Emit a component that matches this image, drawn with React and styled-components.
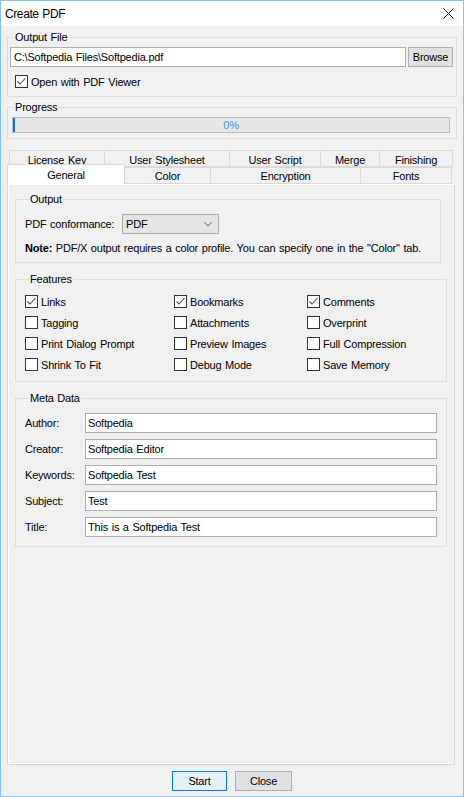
import styled, { createGlobalStyle } from "styled-components";

const GlobalStyle = createGlobalStyle`
  html, body {
    margin: 0;
    padding: 0;
    background: #f0f0f0;
  }
  * {
    box-sizing: border-box;
  }
`;

const FONT = `"Liberation Sans", Arial, sans-serif`;

const topTabs = [
  { label: "License Key", width: 96 },
  { label: "User Stylesheet", width: 126 },
  { label: "User Script", width: 92 },
  { label: "Merge", width: 60 },
  { label: "Finishing", width: 74 },
];

const bottomTabs = [
  { label: "General", width: 118, active: true },
  { label: "Color", width: 87 },
  { label: "Encryption", width: 151 },
  { label: "Fonts", width: 92 },
];

const features = [
  ["Links", true],
  ["Bookmarks", true],
  ["Comments", true],
  ["Tagging", false],
  ["Attachments", false],
  ["Overprint", false],
  ["Print Dialog Prompt", false],
  ["Preview Images", false],
  ["Full Compression", false],
  ["Shrink To Fit", false],
  ["Debug Mode", false],
  ["Save Memory", false],
];

const meta = [
  ["Author:", "Softpedia"],
  ["Creator:", "Softpedia Editor"],
  ["Keywords:", "Softpedia Test"],
  ["Subject:", "Test"],
  ["Title:", "This is a Softpedia Test"],
];

function CheckBox({ checked }) {
  return (
    <Box>
      {checked && (
        <svg width="11" height="11" viewBox="0 0 11 11">
          <path d="M1.5 5.5 L4 8 L9.5 2" fill="none" stroke="#555" strokeWidth="1.1" />
        </svg>
      )}
    </Box>
  );
}

function App() {
  return (
    <Window>
      <GlobalStyle />
      <TitleBar>
        <span>Create PDF</span>
        <CloseX>
          <svg width="11" height="11" viewBox="0 0 11 11">
            <path d="M0.5 0.5 L10.5 10.5 M10.5 0.5 L0.5 10.5" stroke="#111" strokeWidth="1" />
          </svg>
        </CloseX>
      </TitleBar>

      <Body>
        <Group $mt={4} $pb={4}>
          <Legend>Output File</Legend>
          <FileRow>
            <FileInput defaultValue="C:\Softpedia Files\Softpedia.pdf" />
            <BrowseButton>Browse</BrowseButton>
          </FileRow>
          <CheckRow $ml={5} $mt={4}>
            <CheckBox checked />
            <span>Open with PDF Viewer</span>
          </CheckRow>
        </Group>

        <Group $mt={3} $pb={5}>
          <Legend>Progress</Legend>
          <ProgressBar>
            <ProgressFill />
            <ProgressText>0%</ProgressText>
          </ProgressBar>
        </Group>

        <Tabs>
          <TabRow $ml={2}>
            {topTabs.map((t) => (
              <Tab key={t.label} $w={t.width} $back>
                {t.label}
              </Tab>
            ))}
          </TabRow>
          <TabRow>
            {bottomTabs.map((t) => (
              <Tab key={t.label} $w={t.width} $active={t.active}>
                {t.label}
              </Tab>
            ))}
          </TabRow>
        </Tabs>

        <Panel>
          <Group $mr={6} $pl={9} $pb={7}>
            <Legend>Output</Legend>
            <ConfRow>
              <ConfLabel>PDF conformance:</ConfLabel>
              <Select>
                <span>PDF</span>
                <svg width="8" height="5" viewBox="0 0 8 5">
                  <path d="M0.5 0.5 L4 4 L7.5 0.5" fill="none" stroke="#555" strokeWidth="1" />
                </svg>
              </Select>
            </ConfRow>
            <Note>
              <b>Note:</b> PDF/X output requires a color profile. You can specify one in the "Color" tab.
            </Note>
          </Group>

          <Group $mt={9} $pl={9} $pb={6}>
            <Legend>Features</Legend>
            <FeatureGrid>
              {features.map(([label, checked]) => (
                <CheckRow key={label}>
                  <CheckBox checked={checked} />
                  <span>{label}</span>
                </CheckRow>
              ))}
            </FeatureGrid>
          </Group>

          <Group $mt={9} $pl={9} $pr={9} $pb={9}>
            <Legend>Meta Data</Legend>
            <MetaList>
              {meta.map(([label, value]) => (
                <MetaRow key={label}>
                  <MetaLabel>{label}</MetaLabel>
                  <MetaInput defaultValue={value} />
                </MetaRow>
              ))}
            </MetaList>
          </Group>
        </Panel>

        <Footer>
          <Button $primary $w={55}>Start</Button>
          <Button $w={57}>Close</Button>
        </Footer>
      </Body>
    </Window>
  );
}

export default App;

const textTweak = `
  letter-spacing: -0.2px;
  word-spacing: 0.8px;
`;

const Window = styled.div`
  width: 464px;
  height: 797px;
  border: 1px solid #88c1f2;
  background: #f0f0f0;
  display: flex;
  flex-direction: column;
  font-family: ${FONT};
  font-size: 11px;
  ${textTweak}
  color: #000;
  overflow: hidden;
`;

const TitleBar = styled.div`
  height: 25px;
  background: #fff;
  display: flex;
  align-items: center;
  justify-content: space-between;
  padding: 0 9px 0 4px;
  font-size: 12px;
  letter-spacing: -0.4px;
`;

const CloseX = styled.div`
  display: flex;
  align-items: center;
`;

const Body = styled.div`
  flex: 1;
  display: flex;
  flex-direction: column;
  padding: 0 6px;
`;

const Group = styled.fieldset`
  margin: ${(p) => p.$mt || 0}px ${(p) => p.$mr || 0}px 0 0;
  padding: 3px ${(p) => p.$pr || 3}px ${(p) => p.$pb ?? 8}px ${(p) => p.$pl || 2}px;
  border: 1px solid #dcdcdc;
  min-width: 0;
`;

const Legend = styled.legend`
  padding: 0 1px;
  margin-left: 4px;
  line-height: 14px;
`;

const FileRow = styled.div`
  display: flex;
  gap: 2px;
  height: 20px;
`;

const FileInput = styled.input`
  flex: 1;
  min-width: 0;
  height: 20px;
  border: 1px solid #abadb3;
  background: #fff;
  padding: 0 3px;
  font-family: ${FONT};
  font-size: 11px;
  ${textTweak}
  outline: none;
`;

const BrowseButton = styled.button`
  width: 45px;
  height: 20px;
  border: 1px solid #adadad;
  background: #e1e1e1;
  font-family: ${FONT};
  font-size: 11px;
  ${textTweak}
  padding: 0;
`;

const CheckRow = styled.label`
  display: flex;
  align-items: center;
  gap: 3px;
  height: 21px;
  margin-left: ${(p) => p.$ml || 0}px;
  margin-top: ${(p) => p.$mt || 0}px;
  white-space: nowrap;
`;

const Box = styled.span`
  width: 13px;
  height: 13px;
  border: 1px solid #333;
  background: #fff;
  display: flex;
  align-items: center;
  justify-content: center;
  flex-shrink: 0;
`;

const ProgressBar = styled.div`
  position: relative;
  height: 16px;
  margin: 0 3px 0 2px;
  border: 1px solid #bcbcbc;
  background: #e6e6e6;
  display: flex;
  align-items: center;
  justify-content: center;
`;

const ProgressFill = styled.div`
  position: absolute;
  left: 0;
  top: 0;
  bottom: 0;
  width: 2px;
  background: #0078d7;
`;

const ProgressText = styled.span`
  color: #4b95dd;
`;

const Tabs = styled.div`
  margin-top: 11px;
  display: flex;
  flex-direction: column;
`;

const TabRow = styled.div`
  display: flex;
  height: 17px;
  margin-left: ${(p) => p.$ml || 0}px;
`;

const Tab = styled.div`
  width: ${(p) => p.$w}px;
  height: ${(p) => (p.$active ? 20 : 17)}px;
  margin-top: ${(p) => (p.$active ? -3 : 0)}px;
  margin-left: -1px;
  &:first-child {
    margin-left: 0;
  }
  border: 1px solid #d9d9d9;
  border-bottom: ${(p) => (p.$active ? "none" : "1px solid #d9d9d9")};
  background: ${(p) => (p.$active ? "#fff" : "#f0f0f0")};
  display: flex;
  align-items: center;
  justify-content: center;
  padding-top: ${(p) => (p.$back ? 3 : 0)}px;
  overflow: hidden;
  position: relative;
  z-index: ${(p) => (p.$active ? 1 : 0)};
`;

const Panel = styled.div`
  flex: 1;
  border: 1px solid #d9d9d9;
  border-top-color: #fff;
  margin-right: 2px;
  box-shadow: inset 1px -1px 0 #fff;
  padding: 7px 7px 0 7px;
  display: flex;
  flex-direction: column;
`;

const ConfRow = styled.div`
  display: flex;
  align-items: center;
  margin-top: 5px;
`;

const ConfLabel = styled.span`
  width: 97px;
`;

const Select = styled.div`
  width: 97px;
  height: 20px;
  border: 1px solid #acacac;
  background: #e5e5e5;
  display: flex;
  align-items: center;
  justify-content: space-between;
  padding: 0 6px 0 3px;
`;

const Note = styled.div`
  margin-top: 7px;
  line-height: 14px;
  white-space: nowrap;
`;

const FeatureGrid = styled.div`
  display: grid;
  grid-template-columns: 149px 133px 1fr;
  margin-top: 2px;
`;

const MetaList = styled.div`
  display: flex;
  flex-direction: column;
  gap: 6px;
  margin-top: 5px;
`;

const MetaRow = styled.div`
  display: flex;
  align-items: center;
`;

const MetaLabel = styled.span`
  width: 60px;
`;

const MetaInput = styled.input`
  flex: 1;
  min-width: 0;
  height: 20px;
  border: 1px solid #abadb3;
  background: #fff;
  padding: 0 2px;
  font-family: ${FONT};
  font-size: 11px;
  ${textTweak}
  outline: none;
`;

const Footer = styled.div`
  height: 31px;
  display: flex;
  justify-content: center;
  gap: 8px;
  padding: 6px 0 5px;
`;

const Button = styled.button`
  width: ${(p) => p.$w}px;
  height: 20px;
  padding: 0;
  border: 1px solid ${(p) => (p.$primary ? "#0078d7" : "#adadad")};
  background: ${(p) => (p.$primary ? "#e5f1fb" : "#e1e1e1")};
  font-family: ${FONT};
  font-size: 11px;
  ${textTweak}
`;
